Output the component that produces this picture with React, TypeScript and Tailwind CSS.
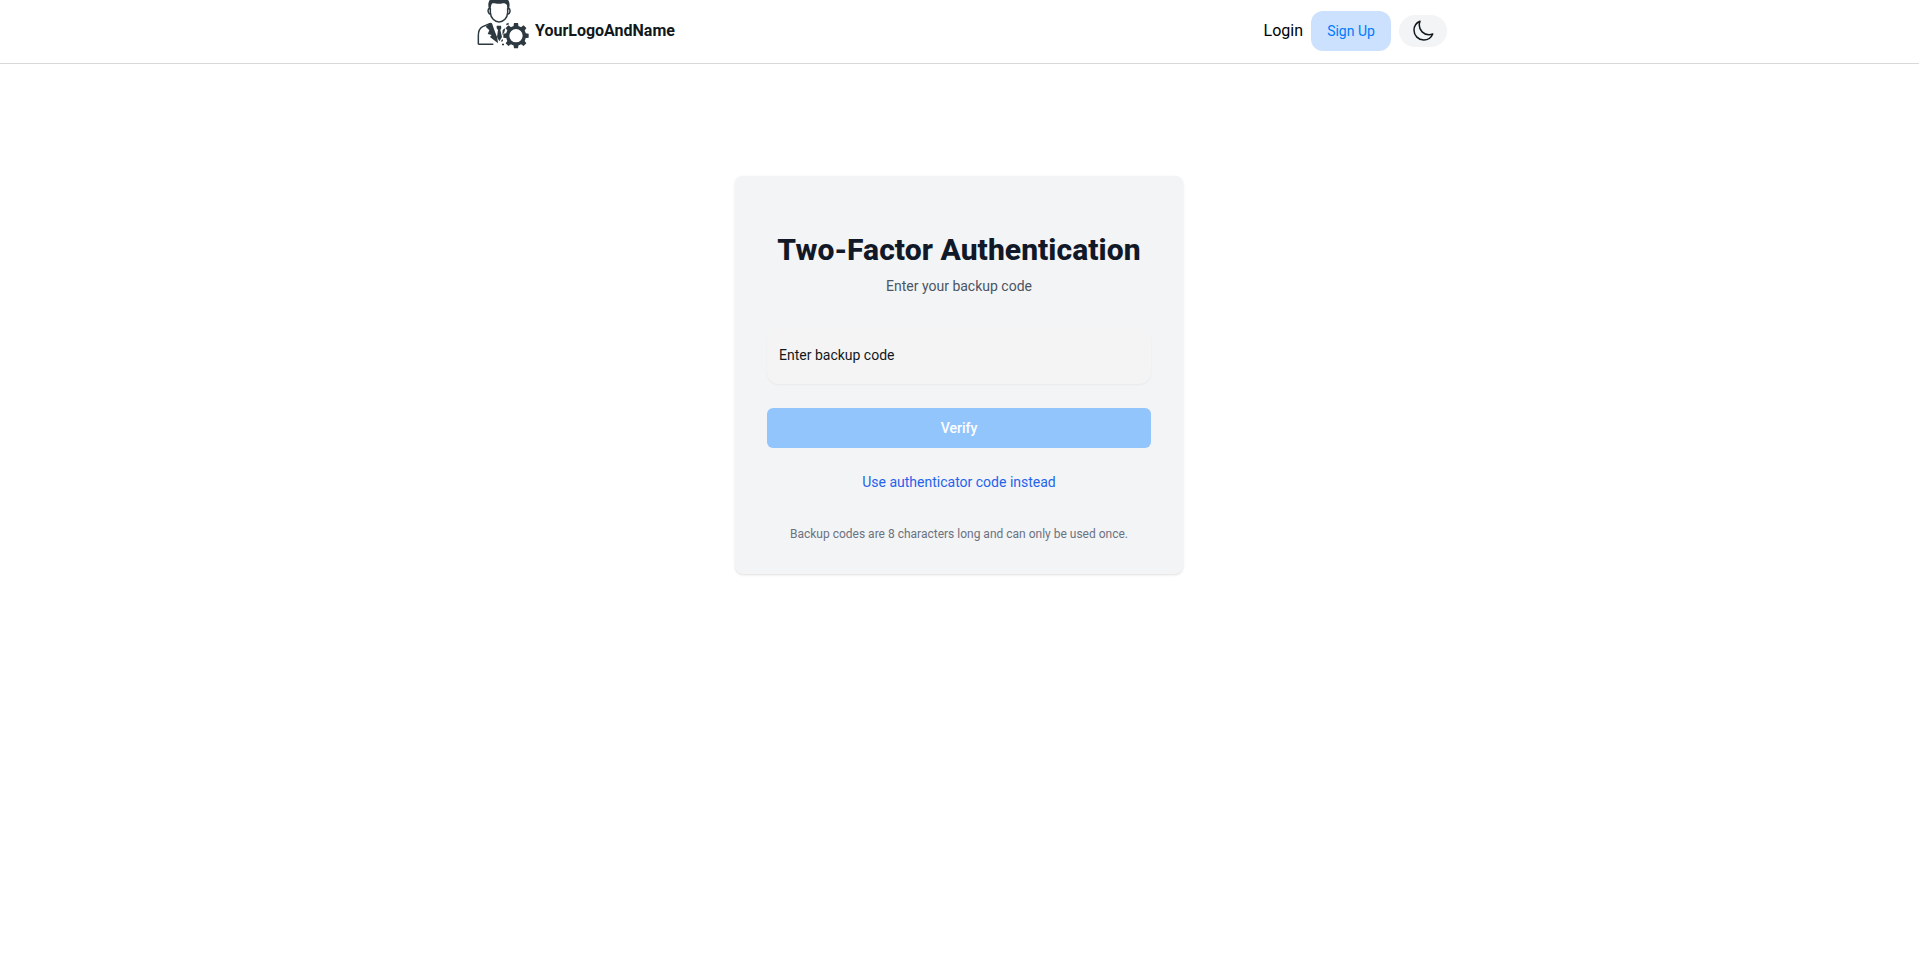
function Logo() {
  return (
    <svg className="h-[50px] w-16 shrink-0" viewBox="3 0 192 150" fill="none" aria-hidden="true">
      {/* head */}
      <path d="M57 27C51 9 58 -7 75 -7H99C116 -7 122 9 117 27L112 31L111 16C107 10 102 9 94 11C82 13 73 9 68 10C64 12 63 16 62 31Z" fill="#2d3941" />
      <path d="M59 25C51 27 54 43 63 42M115 25C123 27 121 43 112 42" stroke="#2d3941" strokeWidth="4.5" />
      <path d="M61 25V38C62 54 74 66 87 66C101 66 112 54 113 38V25" stroke="#2d3941" strokeWidth="4.5" />
      {/* shoulder and jacket */}
      <path d="M61 70L38 80C28 85 25 93 25 107V131Q25 133 28 133H70" stroke="#2d3941" strokeWidth="4.5" strokeLinejoin="round" />
      <path d="M61 68L66 70L74 93L82 113L84 130L60 111L65 105L53 102L58 91L47 80Z" fill="#2d3941" />
      <path d="M80 77H93L94 85L91 90L96 111L88 124L81 111L84 90L80 85Z" fill="#2d3941" />
      <path d="M108 72L115 68L117 73L110 76ZM98 90L106 84L103 97L97 105ZM94 121L98 117L99 123L94 126ZM96 131H102V136H96Z" fill="#2d3941" />
      {/* gear */}
      <circle cx="138" cy="107" r="25" stroke="#2d3941" strokeWidth="10" />
      <g fill="#2d3941">
        <path d="M130 82L132 69H144L146 82Z" />
        <path d="M130 82L132 69H144L146 82Z" transform="rotate(45 138 107)" />
        <path d="M130 82L132 69H144L146 82Z" transform="rotate(90 138 107)" />
        <path d="M130 82L132 69H144L146 82Z" transform="rotate(135 138 107)" />
        <path d="M130 82L132 69H144L146 82Z" transform="rotate(180 138 107)" />
        <path d="M130 82L132 69H144L146 82Z" transform="rotate(225 138 107)" />
        <path d="M130 82L132 69H144L146 82Z" transform="rotate(270 138 107)" />
        <path d="M130 82L132 69H144L146 82Z" transform="rotate(315 138 107)" />
      </g>
    </svg>
  );
}

function MoonIcon() {
  return (
    <svg className="size-6" viewBox="0 0 24 24" fill="none" stroke="currentColor" strokeWidth="1.5" strokeLinecap="round" strokeLinejoin="round" aria-hidden="true">
      <path d="M21.752 15.002A9.72 9.72 0 0 1 18 15.75c-5.385 0-9.75-4.365-9.75-9.75 0-1.33.266-2.597.748-3.752A9.753 9.753 0 0 0 3 11.25C3 16.635 7.365 21 12.75 21a9.753 9.753 0 0 0 9.002-5.998Z" />
    </svg>
  );
}

function Header() {
  return (
    <header className="h-16 border-b border-[#d9d9db] bg-white pr-px">
      <div className="mx-auto flex h-full max-w-5xl items-start justify-between px-6">
        <a href="#" className="flex items-start">
          <Logo />
          <span className="pt-[19px] text-base leading-6 font-bold">YourLogoAndName</span>
        </a>
        <nav className="flex items-center gap-2 pt-[11px]">
          <a href="#" className="text-base text-black">Login</a>
          <a href="#" className="flex h-10 w-20 items-center justify-center rounded-xl bg-[#cce1fd] text-sm text-[#007bff]">
            Sign Up
          </a>
          <button aria-label="Toggle theme" className="flex h-8 w-12 items-center justify-center rounded-full bg-[#f3f4f6]">
            <MoonIcon />
          </button>
        </nav>
      </div>
    </header>
  );
}

export default function App() {
  return (
    <div className="min-h-screen bg-white font-[Roboto,sans-serif] text-[#11181c]">
      <Header />
      <main className="flex justify-center pt-28 pr-px">
        <section className="flex w-[448px] flex-col rounded-lg bg-[#f3f4f6] px-8 pt-14 pb-8 text-center shadow-[0_1px_3px_0_rgb(0_0_0/0.1),0_1px_2px_-1px_rgb(0_0_0/0.1)]">
          <h1 className="-mx-2 text-3xl leading-9 font-extrabold tracking-[0.06px] text-[#111827]">Two-Factor Authentication</h1>
          <p className="mt-2 text-sm text-[#4b5563]">Enter your backup code</p>
          <input
            placeholder="Enter backup code"
            className="mt-8 h-14 w-full rounded-xl bg-[#f4f4f4] px-3 pb-0.5 text-sm shadow-[0_1px_2px_0_rgb(0_0_0/0.05)] outline-none placeholder:text-[#11181c]"
          />
          <button className="mt-6 h-10 rounded-md bg-[#93c5fd] text-sm font-medium text-white">Verify</button>
          <a href="#" className="mt-6 text-sm text-[#2563eb]">Use authenticator code instead</a>
          <p className="mt-[34px] text-xs text-[#6b7280]">Backup codes are 8 characters long and can only be used once.</p>
        </section>
      </main>
    </div>
  );
}
